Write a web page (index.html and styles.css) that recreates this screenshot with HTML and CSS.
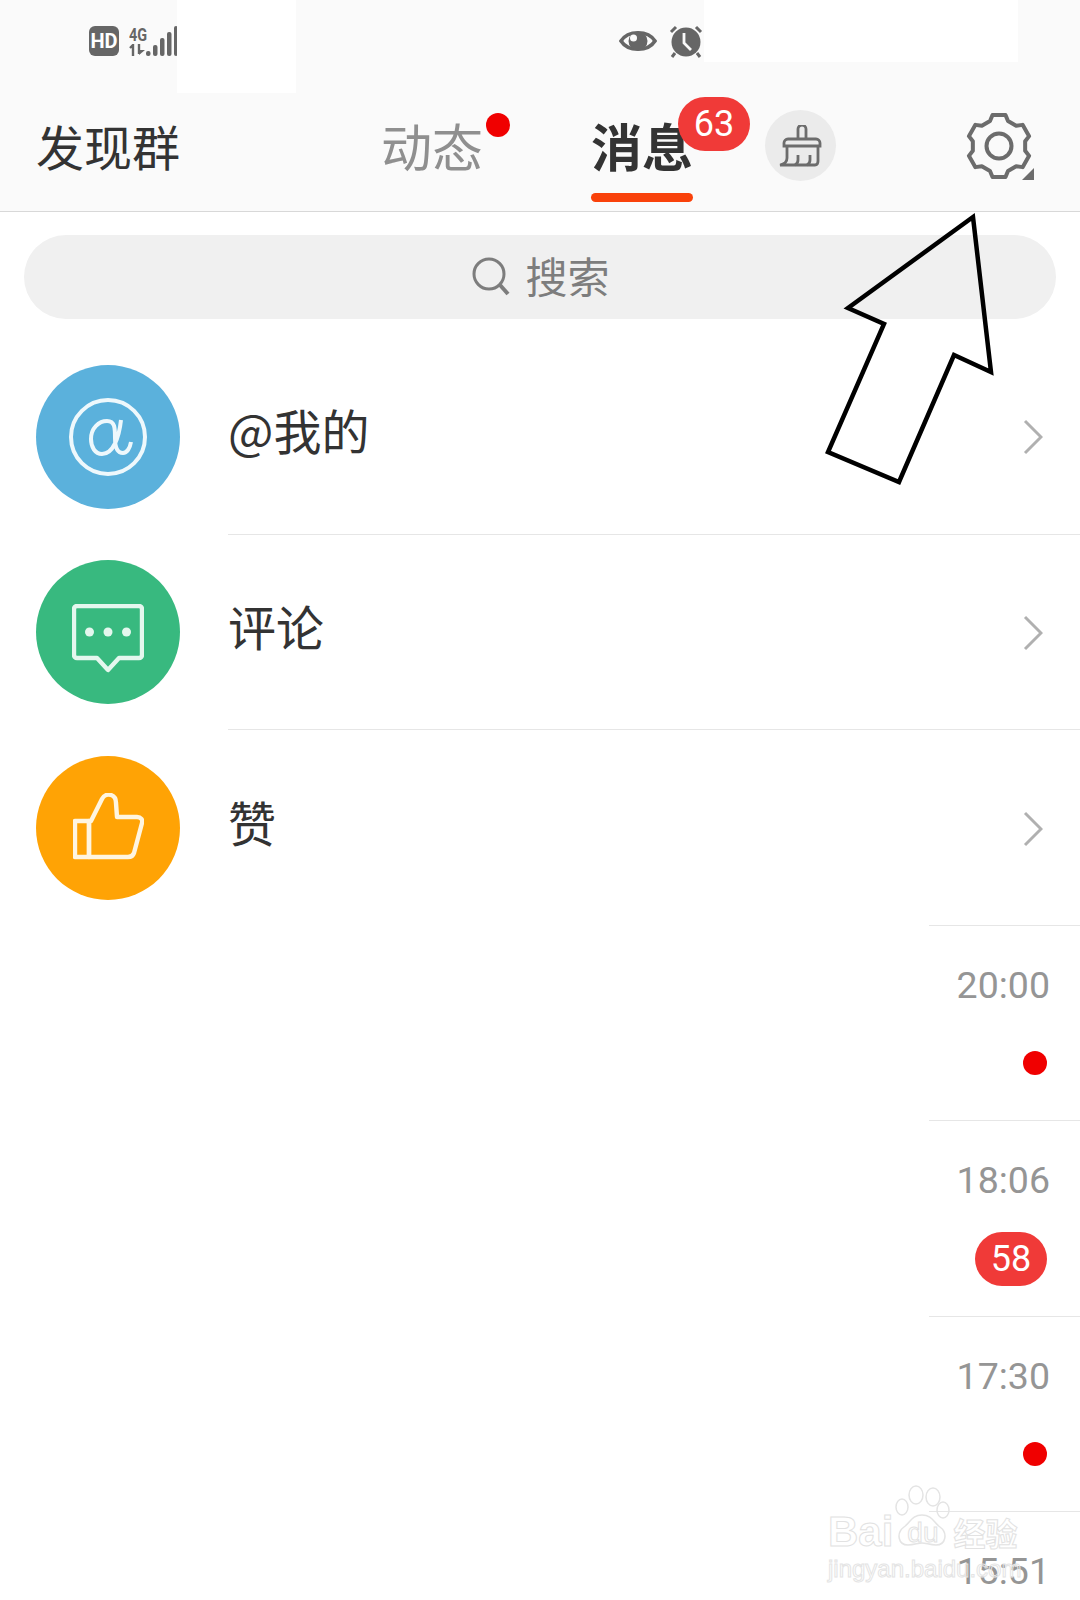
FILE: index.html
```html
<!DOCTYPE html>
<html lang="zh-CN">
<head>
  <meta charset="UTF-8">
  <title>消息</title>
  <link rel="stylesheet" href="styles.css">
</head>
<body>
  <div class="page">
    <header class="top">
      <div class="status">
        <span class="hd">HD</span>
        <div class="net">
          <span class="net-label">4G</span>
          <svg class="net-arrows" width="17" height="12" viewBox="0 0 17 12"><path d="M1 4l3-3v11" fill="none" stroke="#666" stroke-width="2.4"/><path d="M10 0v10" stroke="#666" stroke-width="2.4"/><path d="M10 11l6-5h-6z" fill="#666"/></svg>
        </div>
        <svg class="bars" width="32" height="32" viewBox="0 0 32 32"><g fill="#666"><rect x="0" y="26" width="4.500" height="5" rx="2"/><rect x="7" y="20" width="4.500" height="11" rx="2"/><rect x="14" y="13" width="4.500" height="18" rx="2"/><rect x="21" y="7" width="4.500" height="24" rx="2"/><rect x="28" y="1" width="4" height="30" rx="2"/></g></svg>
        <svg class="eye" width="38" height="26" viewBox="0 0 38 26"><path d="M2 13C9 2 29 2 36 13C29 24 9 24 2 13Z" fill="none" stroke="#666" stroke-width="3.600"/><circle cx="19" cy="13" r="9.500" fill="#666"/><circle cx="14.500" cy="10" r="3.500" fill="#fafafa"/></svg>
        <svg class="alarm" width="34" height="33" viewBox="0 0 34 33"><circle cx="17" cy="17" r="14.500" fill="#666"/><path d="M15 8v10l7 7" fill="none" stroke="#fafafa" stroke-width="2.800"/><path d="M2 7l5-5M32 7l-5-5M6 28l-3 4M28 28l3 4" stroke="#666" stroke-width="3"/></svg>
      </div>
      <nav class="tabs">
        <span class="tab-left">发现群</span>
        <span class="tab tab-dim">动态<i class="dot dot-tab"></i></span>
        <span class="tab tab-on">消息<b class="count count-tab">63</b></span>
        <span class="broom">
          <svg width="44" height="42" viewBox="0 0 44 42" fill="none" stroke="#6c6c6c" stroke-width="2.800"><path d="M19 14V4a4 4 0 0 1 8 0v10"/><path d="M5 21v-3a4 4 0 0 1 4-4h28a4 4 0 0 1 4 4v3z"/><path d="M8 21v12c0 3-2 6-7 7h35c2 0 3-2 3-4V21"/><path d="M19 30v5c0 2-1 4-3 5M31 30v5c0 2-1 4-3 5"/></svg>
        </span>
        <svg class="gear" width="70" height="70" viewBox="-33 -34 70 70" fill="none" stroke="#6c6c6c" stroke-width="4" stroke-linejoin="round"><path d="M-6.500-31H6.500L9-25L17.150-20.290L23.600-21.130L30.100-9.870L26.150-4.710V4.710L30.100 9.870L23.600 21.130L17.150 20.290L9 25L6.500 31H-6.500L-9 25L-17.150 20.290L-23.600 21.130L-30.100 9.870L-26.150 4.710V-4.710L-30.100-9.870L-23.600-21.130L-17.150-20.290L-9-25Z"/><circle r="12.500"/><path d="M35 22V34H23Z" fill="#6c6c6c" stroke="none"/></svg>
      </nav>
    </header>

    <div class="search">
      <svg width="38" height="40" viewBox="0 0 38 40" fill="none" stroke="#7d7d7d" stroke-width="3"><circle cx="17" cy="17" r="15"/><path d="M28 28l8 9" stroke-width="4"/></svg>
      <span class="search-text">搜索</span>
    </div>

    <ul class="list">
      <li class="row">
        <span class="badge badge-blue">
          <svg width="80" height="80" viewBox="0 0 80 80" fill="none" stroke="#eef8fc" stroke-width="4"><circle cx="40" cy="40" r="37"/><path d="M53 23C51 41 45 57 34 57C27 57 23 50 23 42C23 31 31 24 39 24C47 24 47 31 47 41C47 51 50 56 55 56C59 56 62 51 63 45"/></svg>
        </span>
        <div class="row-body">
          <span class="row-title">@我的</span>
          <svg class="chev" width="20" height="36" viewBox="0 0 20 36"><path d="M2 2l16 16L2 34" fill="none" stroke="#b0b0b0" stroke-width="3"/></svg>
        </div>
      </li>
      <li class="row">
        <span class="badge badge-green">
          <svg class="icon-chat" width="72" height="71" viewBox="0 0 72 71" fill="none" stroke="#e4f7ee" stroke-width="4.400" stroke-linejoin="round"><path d="M5 2h62a3 3 0 0 1 3 3v46a3 3 0 0 1-3 3H47L36 66 25 54H5a3 3 0 0 1-3-3V5a3 3 0 0 1 3-3Z"/><g fill="#e4f7ee" stroke="none"><circle cx="17.500" cy="28" r="4.500"/><circle cx="36" cy="28" r="4.500"/><circle cx="54.500" cy="28" r="4.500"/></g></svg>
        </span>
        <div class="row-body">
          <span class="row-title">评论</span>
          <svg class="chev" width="20" height="36" viewBox="0 0 20 36"><path d="M2 2l16 16L2 34" fill="none" stroke="#b0b0b0" stroke-width="3"/></svg>
        </div>
      </li>
      <li class="row row-short">
        <span class="badge badge-orange">
          <svg class="icon-thumb" width="71" height="67" viewBox="0 0 71 67" fill="none" stroke="#fff5e0" stroke-width="4.400" stroke-linejoin="round"><path d="M2 28h14v36H2z"/><path d="M16 64V28H18L29 6C31 2 35 1 38 2C41 3 43 6 43 10L44 24H64C68 24 70 27 69 30L61 60C60 63 58 64 55 64Z"/></svg>
        </span>
        <div class="row-body">
          <span class="row-title">赞</span>
          <svg class="chev" width="20" height="36" viewBox="0 0 20 36"><path d="M2 2l16 16L2 34" fill="none" stroke="#b0b0b0" stroke-width="3"/></svg>
        </div>
      </li>
      <li class="chat">
        <span class="time">20:00</span>
        <i class="dot"></i>
      </li>
      <li class="chat">
        <span class="time">18:06</span>
        <b class="count">58</b>
      </li>
      <li class="chat">
        <span class="time">17:30</span>
        <i class="dot"></i>
      </li>
      <li class="chat">
        <span class="time">15:51</span>
      </li>
    </ul>

    <!-- things pasted on top of the screenshot -->
    <div class="patch patch-a"></div>
    <div class="patch patch-b"></div>

    <svg class="arrow" width="180" height="280" viewBox="820 210 180 280"><path d="M973 217L848 308L884 324L828 452L899 482L954 355L991 372Z" fill="none" stroke="#000" stroke-width="4.500"/></svg>

    <div class="mark">
      <svg class="mark-paw" width="60" height="62" viewBox="0 0 60 62" fill="none" stroke="#e4e4e4" stroke-width="1.500"><ellipse cx="8" cy="22" rx="6" ry="8"/><ellipse cx="22" cy="10" rx="7" ry="9"/><ellipse cx="39" cy="12" rx="7" ry="9"/><ellipse cx="49" cy="25" rx="6" ry="8"/><path d="M28 30C38 30 40 38 46 42C54 48 52 60 42 60C36 60 32 58 28 58C24 58 20 60 14 60C4 60 2 48 10 42C16 38 18 30 28 30Z"/></svg>
      <div class="mark-top"><span>Bai</span><span class="mark-du">du</span><span class="mark-cn">经验</span></div>
      <div class="mark-url">jingyan.baidu.com</div>
    </div>
  </div>
</body>
</html>
```

FILE: styles.css
```css
* {
  box-sizing: border-box;
}

body {
  margin: 0;
  background: #fff;
  font-family: "Noto Sans CJK SC", "Noto Sans", sans-serif;
}

.page {
  position: relative;
  width: 1080px;
  height: 1600px;
  overflow: hidden;
}

.top {
  height: 212px;
  background: #fafafa;
  border-bottom: 1px solid #d8d8d8;
}

.status {
  display: flex;
  align-items: center;
  height: 82px;
  padding-left: 89px;
}

.hd {
  width: 30px;
  height: 30px;
  border-radius: 6px;
  background: #666;
  color: #fff;
  font: bold 20px/30px "Roboto", sans-serif;
  text-align: center;
}

.net {
  display: flex;
  flex-direction: column;
  align-items: flex-start;
  width: 17px;
  margin-left: 10px;
}

.net-label {
  height: 18px;
  color: #666;
  font: bold 16px/16px "Liberation Sans Narrow", "Roboto", sans-serif;
  transform: scale(0.9, 1.15);
  transform-origin: left top;
}

.eye {
  margin-left: 441px;
}

.alarm {
  margin-left: 12px;
}

.tabs {
  display: flex;
  align-items: flex-start;
  height: 129px;
  padding-left: 36px;
}

.tab-left {
  width: 345px;
  margin-top: 34px;
  color: #333;
  font-size: 48px;
  line-height: 58px;
}

.tab {
  position: relative;
  font-size: 51px;
  line-height: 58px;
}

.tab-dim {
  width: 210px;
  margin-top: 34px;
  color: #8f8f8f;
}

.tab-on {
  width: 174px;
  height: 84px;
  margin-top: 34px;
  color: #333;
  font-weight: bold;
}

.tab-on::after {
  content: "";
  position: absolute;
  left: 0;
  top: 77px;
  width: 102px;
  height: 9px;
  border-radius: 5px;
  background: #f9410a;
}

.dot {
  width: 24px;
  height: 24px;
  border-radius: 50%;
  background: #f00000;
}

.dot-tab {
  position: absolute;
  left: 105px;
  top: -3px;
}

.count {
  display: block;
  width: 72px;
  height: 54px;
  border-radius: 27px;
  background: #f03a38;
  color: #fff;
  font: normal 36px/54px "Roboto", sans-serif;
  text-align: center;
}

.count-tab {
  position: absolute;
  left: 87px;
  top: -19px;
}

.broom {
  display: flex;
  align-items: center;
  justify-content: center;
  width: 71px;
  height: 71px;
  margin-top: 28px;
  border-radius: 50%;
  background: #ebebeb;
}

.gear {
  margin-left: 130px;
  margin-top: 30px;
}

.search {
  display: flex;
  align-items: center;
  justify-content: center;
  gap: 15px;
  height: 84px;
  margin: 23px 24px 0;
  padding-left: 2px;
  border-radius: 42px;
  background: #f0f0f0;
  color: #7d7d7d;
  font-size: 42px;
}

.search-text {
  margin-top: -6px;
}

.list {
  margin: 20px 0 0;
  padding: 0;
  list-style: none;
}

.row {
  display: flex;
  align-items: center;
  height: 195.500px;
}

.badge {
  display: flex;
  align-items: center;
  justify-content: center;
  flex: none;
  width: 144px;
  height: 144px;
  margin-left: 36px;
  border-radius: 50%;
}

.badge-blue {
  background: #5bb1dc;
}

.badge-green {
  background: #38b97f;
}

.badge-orange {
  background: #ffa305;
}

.icon-chat {
  margin-top: 14px;
}

.icon-thumb {
  margin-bottom: 3px;
}

.row-body {
  display: flex;
  flex: 1;
  align-items: center;
  justify-content: space-between;
  align-self: stretch;
  margin-left: 48px;
  padding-right: 37px;
  border-bottom: 1px solid #e6e6e6;
}

.row-short .row-body {
  position: relative;
  border-bottom: 0;
}

.row-short .row-body::after {
  content: "";
  position: absolute;
  right: 0;
  bottom: 0;
  width: 151px;
  height: 1px;
  background: #e6e6e6;
}

.row-title {
  margin-top: -14px;
  color: #333;
  font-size: 48px;
}

.chev {
  margin-top: 2px;
}

.chat {
  display: flex;
  flex-direction: column;
  align-items: flex-end;
  width: 151px;
  height: 195.500px;
  margin-left: auto;
  padding: 36px 32px 0 0;
  border-bottom: 1px solid #e6e6e6;
}

.time {
  height: 74px;
  margin-right: -2px;
  color: #959595;
  font: 37.500px/46px "Roboto", sans-serif;
}

.chat .dot {
  margin-top: 15px;
  margin-right: 1px;
}

.chat .count {
  margin-top: 1px;
  margin-right: 1px;
}

.patch {
  position: absolute;
  top: 0;
  background: #fff;
}

.patch-a {
  left: 177px;
  width: 119px;
  height: 93px;
}

.patch-b {
  left: 704px;
  width: 314px;
  height: 62px;
}

.arrow {
  position: absolute;
  left: 820px;
  top: 210px;
}

.mark {
  position: absolute;
  left: 828px;
  top: 1485px;
  width: 200px;
  height: 92px;
  color: transparent;
}

.mark-paw {
  position: absolute;
  left: 66px;
  top: 0;
}

.mark-top {
  position: absolute;
  left: 0;
  top: 22px;
  display: flex;
  align-items: baseline;
  white-space: nowrap;
  font: bold 42px/50px "Liberation Sans", sans-serif;
  -webkit-text-stroke: 1px #e2e2e2;
}

.mark-du {
  position: relative;
  top: -4px;
  margin-left: 14px;
  font-size: 28px;
  font-weight: normal;
}

.mark-cn {
  margin-left: 15px;
  font-family: "Noto Sans CJK SC", sans-serif;
  font-size: 32px;
}

.mark-url {
  position: absolute;
  left: 0;
  top: 68px;
  font: 24px/32px "Liberation Sans", sans-serif;
  white-space: nowrap;
  -webkit-text-stroke: 1px #e4e4e4;
}
```
